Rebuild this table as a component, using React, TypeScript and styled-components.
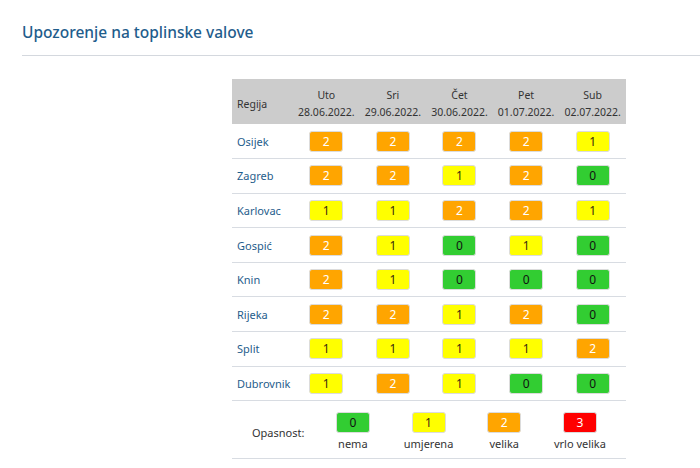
import styled, { createGlobalStyle } from "styled-components"

const GlobalStyle = createGlobalStyle`
  body {
    margin: 0;
    background: #fff;
    font-family: "Noto Sans", "Open Sans", sans-serif;
    color: #333;
  }
`

type Level = 0 | 1 | 2 | 3

const DAYS = [
  { day: "Uto", date: "28.06.2022." },
  { day: "Sri", date: "29.06.2022." },
  { day: "Čet", date: "30.06.2022." },
  { day: "Pet", date: "01.07.2022." },
  { day: "Sub", date: "02.07.2022." },
]

const ROWS: { city: string; levels: Level[] }[] = [
  { city: "Osijek", levels: [2, 2, 2, 2, 1] },
  { city: "Zagreb", levels: [2, 2, 1, 2, 0] },
  { city: "Karlovac", levels: [1, 1, 2, 2, 1] },
  { city: "Gospić", levels: [2, 1, 0, 1, 0] },
  { city: "Knin", levels: [2, 1, 0, 0, 0] },
  { city: "Rijeka", levels: [2, 2, 1, 2, 0] },
  { city: "Split", levels: [1, 1, 1, 1, 2] },
  { city: "Dubrovnik", levels: [1, 2, 1, 0, 0] },
]

const LEGEND: { level: Level; label: string }[] = [
  { level: 0, label: "nema" },
  { level: 1, label: "umjerena" },
  { level: 2, label: "velika" },
  { level: 3, label: "vrlo velika" },
]

const LEVEL_BG = ["#32cd32", "#ffff00", "#ffa500", "#ff0000"]
const LEVEL_FG = ["#111", "#3a2a10", "#fff", "#fff"]

export default function App() {
  return (
    <Page>
      <GlobalStyle />
      <Title>Upozorenje na toplinske valove</Title>
      <Divider />
      <Table>
        <colgroup>
          <col style={{ width: 61 }} />
          {DAYS.map((d) => (
            <col key={d.date} style={{ width: 66.6 }} />
          ))}
        </colgroup>
        <thead>
          <HeadRow>
            <HeadCell $left>Regija</HeadCell>
            {DAYS.map((d) => (
              <HeadCell key={d.date}>
                {d.day}
                <br />
                {d.date}
              </HeadCell>
            ))}
          </HeadRow>
        </thead>
        <tbody>
          {ROWS.map((r) => (
            <Row key={r.city}>
              <CityCell>{r.city}</CityCell>
              {r.levels.map((l, i) => (
                <Cell key={i}>
                  <Badge $level={l}>{l}</Badge>
                </Cell>
              ))}
            </Row>
          ))}
          <LegendRow>
            <td colSpan={6}>
              <Legend>
                <LegendTitle>Opasnost:</LegendTitle>
                {LEGEND.map((item) => (
                  <LegendItem key={item.level}>
                    <Badge $level={item.level}>{item.level}</Badge>
                    <LegendLabel>{item.label}</LegendLabel>
                  </LegendItem>
                ))}
              </Legend>
            </td>
          </LegendRow>
        </tbody>
      </Table>
    </Page>
  )
}

const Page = styled.div`
  padding: 22px 0 0 22px;
  width: 700px;
  box-sizing: border-box;
  overflow: hidden;
`

const Title = styled.h2`
  margin: 0;
  font-size: 15.5px;
  font-weight: 500;
  color: #1f5d8c;
  line-height: 20px;
`

const Divider = styled.hr`
  margin: 13px 0 23px;
  border: 0;
  border-top: 1px solid #d4d8de;
`

const Table = styled.table`
  margin-left: 210px;
  width: 394px;
  border-collapse: collapse;
  table-layout: fixed;
  font-size: 11px;
`

const HeadRow = styled.tr`
  background: #cccccc;
  height: 45px;
`

const HeadCell = styled.th<{ $left?: boolean }>`
  font-weight: 400;
  font-size: 10.5px;
  line-height: 17px;
  color: #333;
  padding: 5px 0 0;
  text-align: ${({ $left }) => ($left ? "left" : "center")};
  padding-left: ${({ $left }) => ($left ? "5px" : "0")};
  vertical-align: middle;
  white-space: nowrap;
`

const Row = styled.tr`
  height: 34.6px;
  border-bottom: 1px solid #d8dce2;
`

const CityCell = styled.td`
  padding: 0 0 0 5px;
  color: #1f5d8c;
  white-space: nowrap;
`

const Cell = styled.td`
  padding: 0;
  text-align: center;
  vertical-align: middle;
`

const Badge = styled.div<{ $level: Level }>`
  display: inline-flex;
  align-items: center;
  justify-content: center;
  box-sizing: border-box;
  width: 34px;
  height: 21px;
  border: 1px solid #dcdcdc;
  border-radius: 3px;
  font-size: 12px;
  background: ${({ $level }) => LEVEL_BG[$level]};
  color: ${({ $level }) => LEVEL_FG[$level]};
`

const LegendRow = styled.tr`
  height: 55px;
  border-bottom: 1px solid #d8dce2;
`

const Legend = styled.div`
  display: flex;
  align-items: flex-start;
  padding: 10px 0 0;
  height: 55px;
  box-sizing: border-box;
`

const LegendTitle = styled.span`
  width: 63px;
  padding: 13px 0 0 19px;
  color: #333;
  white-space: nowrap;
`

const LegendItem = styled.div`
  width: 75.7px;
  display: flex;
  flex-direction: column;
  align-items: center;
  gap: 3px;
`

const LegendLabel = styled.span`
  color: #333;
  line-height: 15px;
`
